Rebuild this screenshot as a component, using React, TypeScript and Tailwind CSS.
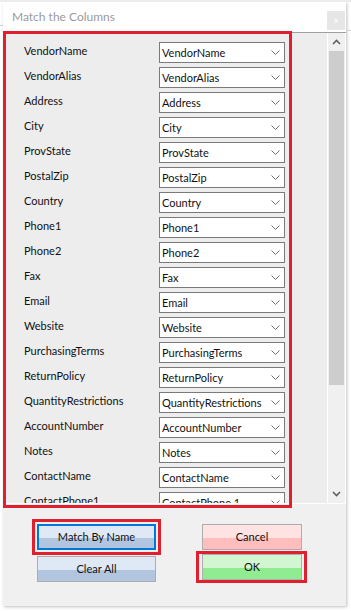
import React from "react";

const rows: [string, string][] = [
  ["VendorName", "VendorName"],
  ["VendorAlias", "VendorAlias"],
  ["Address", "Address"],
  ["City", "City"],
  ["ProvState", "ProvState"],
  ["PostalZip", "PostalZip"],
  ["Country", "Country"],
  ["Phone1", "Phone1"],
  ["Phone2", "Phone2"],
  ["Fax", "Fax"],
  ["Email", "Email"],
  ["Website", "Website"],
  ["PurchasingTerms", "PurchasingTerms"],
  ["ReturnPolicy", "ReturnPolicy"],
  ["QuantityRestrictions", "QuantityRestrictions"],
  ["AccountNumber", "AccountNumber"],
  ["Notes", "Notes"],
  ["ContactName", "ContactName"],
  ["ContactPhone1", "ContactPhone 1"],
];

function Chevron() {
  return (
    <svg width="9" height="5" viewBox="0 0 9 5" className="shrink-0">
      <polyline points="0.5,0.5 4.5,4.5 8.5,0.5" fill="none" stroke="#707070" strokeWidth="1" />
    </svg>
  );
}

function Row({ label, value }: { label: string; value: string }) {
  return (
    <div className="h-[25px] flex items-start shrink-0">
      <div className="w-[156px] pl-[21px] pt-[3px] text-[11px] leading-[15px] text-[#111] whitespace-nowrap">
        {label}
      </div>
      <div className="mt-[2px] w-[126px] h-[21px] bg-white border border-[#7a7a7a] flex items-center justify-between pl-[2px] pr-[4px]">
        <span className="text-[11px] leading-[15px] text-[#111] whitespace-nowrap">{value}</span>
        <Chevron />
      </div>
    </div>
  );
}

function Btn({
  label,
  top,
  bottom,
  border,
  w,
}: {
  label: string;
  top: string;
  bottom: string;
  border: string;
  w: string;
}) {
  return (
    <div className={`${w} h-[26px] border ${border} flex flex-col relative`}>
      <div className={`h-[13px] ${top}`} />
      <div className={`flex-1 ${bottom}`} />
      <div className="absolute inset-0 flex items-center justify-center text-[11px] text-[#111]">
        {label}
      </div>
    </div>
  );
}

export default function App() {
  return (
    <div className="w-[351px] h-[611px] bg-white relative overflow-hidden font-['Lato',sans-serif]">
      {/* background hints */}
      <div className="absolute left-0 top-0 w-[351px] h-[2px] bg-[#ececec]" />
      <div className="absolute left-0 top-[25px] w-[3px] h-px bg-[#d0d0d0]" />
      <div className="absolute right-0 top-[30px] w-[5px] h-px bg-[#d0d0d0]" />

      <div className="flex pt-[2px]">
        <div className="w-[3px] shrink-0" />
        <div className="w-[343px] h-[604px] flex flex-col shadow-[1px_1px_3px_rgba(0,0,0,0.25)]">
          {/* title bar */}
          <div className="h-[30px] bg-white flex items-center justify-between pl-[9px] pr-[1px] shrink-0">
            <span className="text-[12px] text-[#9b9b9b]">Match the Columns</span>
            <div className="w-[18px] h-[19px] mt-[7px] bg-[#e6e6e6] flex items-center justify-center text-[9px] text-white leading-none">
              ×
            </div>
          </div>

          {/* panel */}
          <div className="h-[472px] border-t border-[#a0a0a0] border-b border-b-white bg-[#ededed] flex shrink-0 overflow-hidden">
            <div className="w-[324px] flex flex-col pt-[7px] overflow-hidden">
              {rows.map(([l, v]) => (
                <Row key={l} label={l} value={v} />
              ))}
            </div>
            <div className="w-[18px] bg-[#f0f0f0] flex flex-col items-center border-l border-white">
              <div className="h-[18px] w-full flex items-center justify-center">
                <svg width="9" height="6" viewBox="0 0 9 6">
                  <polyline points="1,5 4.5,1.5 8,5" fill="none" stroke="#606060" strokeWidth="1.6" />
                </svg>
              </div>
              <div className="w-[15px] h-[334px] bg-[#cdcdcd]" />
              <div className="flex-1" />
              <div className="h-[18px] w-full flex items-center justify-center">
                <svg width="9" height="6" viewBox="0 0 9 6">
                  <polyline points="1,1 4.5,4.5 8,1" fill="none" stroke="#606060" strokeWidth="1.6" />
                </svg>
              </div>
            </div>
            <div className="w-px bg-white" />
          </div>

          {/* bottom buttons */}
          <div className="flex-1 bg-[#f0f0f0] flex pt-[15px]">
            <div className="w-[29px] shrink-0" />
            <div className="flex flex-col gap-[1px]">
              <div className="border-[3px] border-[#e0202e] p-[2px]">
                <Btn
                  label="Match By Name"
                  top="bg-[#dfe8f5]"
                  bottom="bg-[#b2c5df]"
                  border="border-[#0078d7] outline outline-1 outline-[#0078d7] -outline-offset-2"
                  w="w-[119px]"
                />
              </div>
              <div className="pl-[5px]">
                <Btn label="Clear All" top="bg-[#dfe8f5]" bottom="bg-[#b2c5df]" border="border-[#adadad]" w="w-[119px]" />
              </div>
            </div>
            <div className="w-[35px] shrink-0" />
            <div className="flex flex-col">
              <div className="pl-[6px] pt-[5px]">
                <Btn label="Cancel" top="bg-[#ffe2e2]" bottom="bg-[#ffbdbd]" border="border-[#adadad]" w="w-[100px]" />
              </div>
              <div className="mt-[1px] border-[3px] border-[#e0202e] px-[3px] py-0 w-[111px]">
                <Btn label="OK" top="bg-[#d2f5d2]" bottom="bg-[#90ec90]" border="border-[#adadad]" w="w-[100px]" />
              </div>
            </div>
          </div>
        </div>
      </div>

      {/* annotation: red box around list */}
      <div className="absolute left-[3px] top-[31px] w-[289px] h-[477px] border-[3px] border-[#e0202e] pointer-events-none" />
    </div>
  );
}
